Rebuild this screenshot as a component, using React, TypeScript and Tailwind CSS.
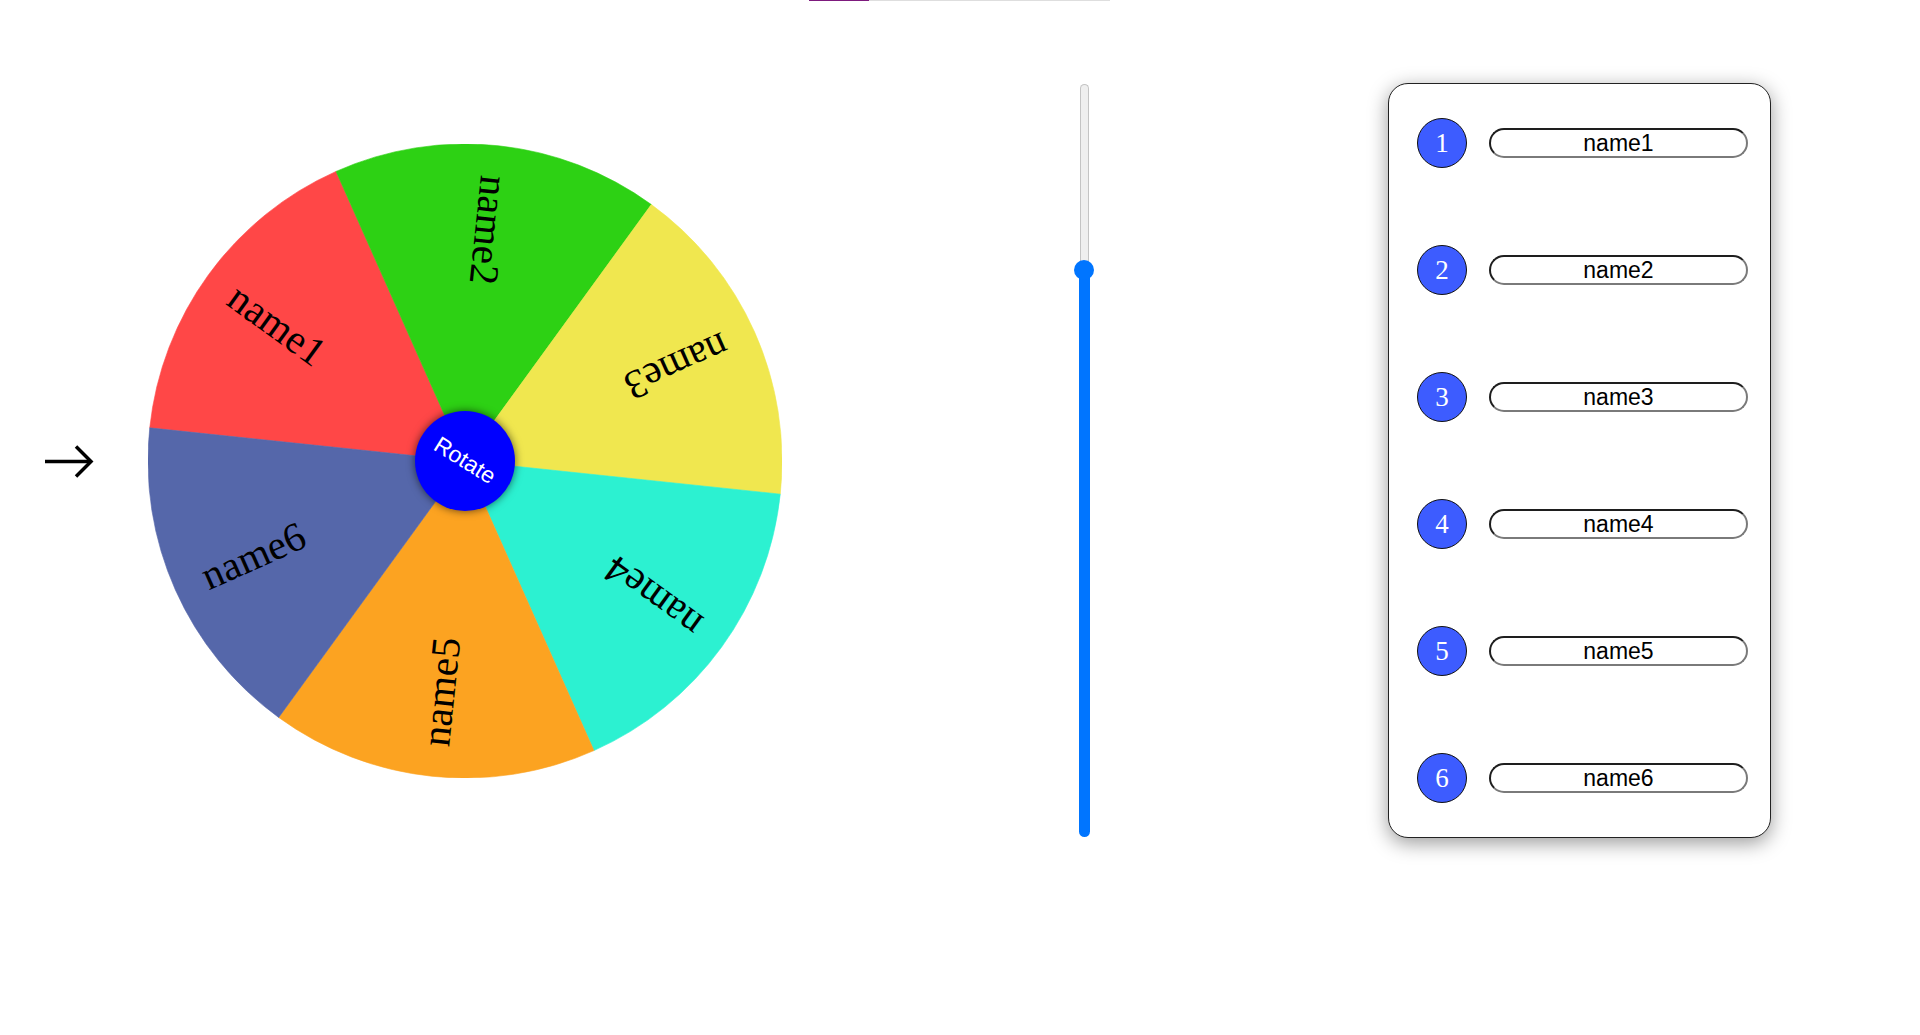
import React from "react";

const SEGMENTS = [
  { name: "name1", color: "#ff4747", start: 186 },
  { name: "name2", color: "#2dd114", start: 246 },
  { name: "name3", color: "#f0e74f", start: 306 },
  { name: "name4", color: "#2cf1d1", start: 366 },
  { name: "name5", color: "#fca321", start: 426 },
  { name: "name6", color: "#5567aa", start: 486 },
];

const C = 317;
const R = 317;

function pt(angleDeg: number, r: number) {
  const a = (angleDeg * Math.PI) / 180;
  return [C + r * Math.cos(a), C + r * Math.sin(a)];
}

function Wheel() {
  return (
    <div className="relative w-[634px] h-[634px] shrink-0">
      <svg width="634" height="634" viewBox="0 0 634 634" className="block">
        {SEGMENTS.map((s) => {
          const [x1, y1] = pt(s.start, R);
          const [x2, y2] = pt(s.start + 60, R);
          const d = `M ${C} ${C} L ${x1} ${y1} A ${R} ${R} 0 0 1 ${x2} ${y2} Z`;
          return <path key={s.name + "p"} d={d} fill={s.color} stroke={s.color} strokeWidth="0.6" />;
        })}
        {SEGMENTS.map((s) => {
          const mid = s.start + 30;
          const [tx, ty] = pt(mid, 232);
          return (
            <text
              key={s.name}
              x={tx}
              y={ty}
              textAnchor="middle"
              dominantBaseline="central"
              transform={`rotate(${mid + 180} ${tx} ${ty})`}
              fontFamily="'Liberation Serif', 'Times New Roman', serif"
              fontSize="41"
              fill="#000"
            >
              {s.name}
            </text>
          );
        })}
      </svg>
      <button className="absolute left-[267px] top-[267px] w-[100px] h-[100px] rounded-full bg-[#0000ff] shadow-[0_0_9px_rgba(0,0,0,0.6)] flex items-center justify-center">
        <span className="rotate-[32deg] text-white text-[23px] leading-none font-['Liberation_Sans',Arial,sans-serif]">
          Rotate
        </span>
      </button>
    </div>
  );
}

function Slider() {
  return (
    <div className="relative w-[20px] h-[753px] flex flex-col items-center shrink-0">
      <div className="w-[10px] h-full flex flex-col">
        <div className="h-[190px] w-[9px] mx-auto rounded-t-full border border-[#c4c4c4] border-b-0 bg-[#efefef]" />
        <div className="flex-1 w-[11px] -mx-[0.5px] rounded-b-full bg-[#0075ff]" />
      </div>
      <div className="absolute left-0 top-[176px] w-[20px] h-[20px] rounded-full bg-[#0075ff]" />
    </div>
  );
}

function Row({ n, name }: { n: number; name: string }) {
  return (
    <div className="flex items-center h-[50px]">
      <div className="w-[50px] h-[50px] rounded-full bg-[#3d5cff] border border-[#111] flex items-center justify-center text-white text-[27px] leading-none font-['Liberation_Serif','Times_New_Roman',serif]">
        {n}
      </div>
      <div className="ml-[22px] w-[259px] h-[30px] rounded-full border-2 border-t-[#1e1e1e] border-l-[#1e1e1e] border-r-[#7a7a7a] border-b-[#7a7a7a] flex items-center justify-center text-black text-[23px] leading-none font-['Liberation_Sans',Arial,sans-serif]">
        {name}
      </div>
    </div>
  );
}

function Panel() {
  return (
    <div className="w-[383px] h-[755px] shrink-0 rounded-[20px] border border-[#222] bg-white shadow-[0_5px_20px_rgba(0,0,0,0.4)] flex flex-col gap-[77px] pt-[34px] pl-[28px]">
      {SEGMENTS.map((s, i) => (
        <Row key={s.name} n={i + 1} name={s.name} />
      ))}
    </div>
  );
}

export default function App() {
  return (
    <div className="w-[1920px] h-[1035px] bg-white overflow-hidden">
      <div className="flex ml-[809px] w-[301px] h-px">
        <div className="w-[60px] h-px bg-[#7d1a7d]" />
        <div className="flex-1 h-px bg-[#dedede]" />
      </div>
      <div className="flex items-center mt-[82px] h-[755px]">
        <svg width="50" height="34" viewBox="0 0 50 34" className="ml-[44px] shrink-0">
          <line x1="1" y1="17.5" x2="47" y2="17.5" stroke="#000" strokeWidth="3.5" />
          <polyline points="32,2.5 47,17.5 32,32.5" fill="none" stroke="#000" strokeWidth="3.5" />
        </svg>
        <div className="ml-[54px]">
          <Wheel />
        </div>
        <div className="ml-[292px]">
          <Slider />
        </div>
        <div className="ml-[294px]">
          <Panel />
        </div>
      </div>
    </div>
  );
}
